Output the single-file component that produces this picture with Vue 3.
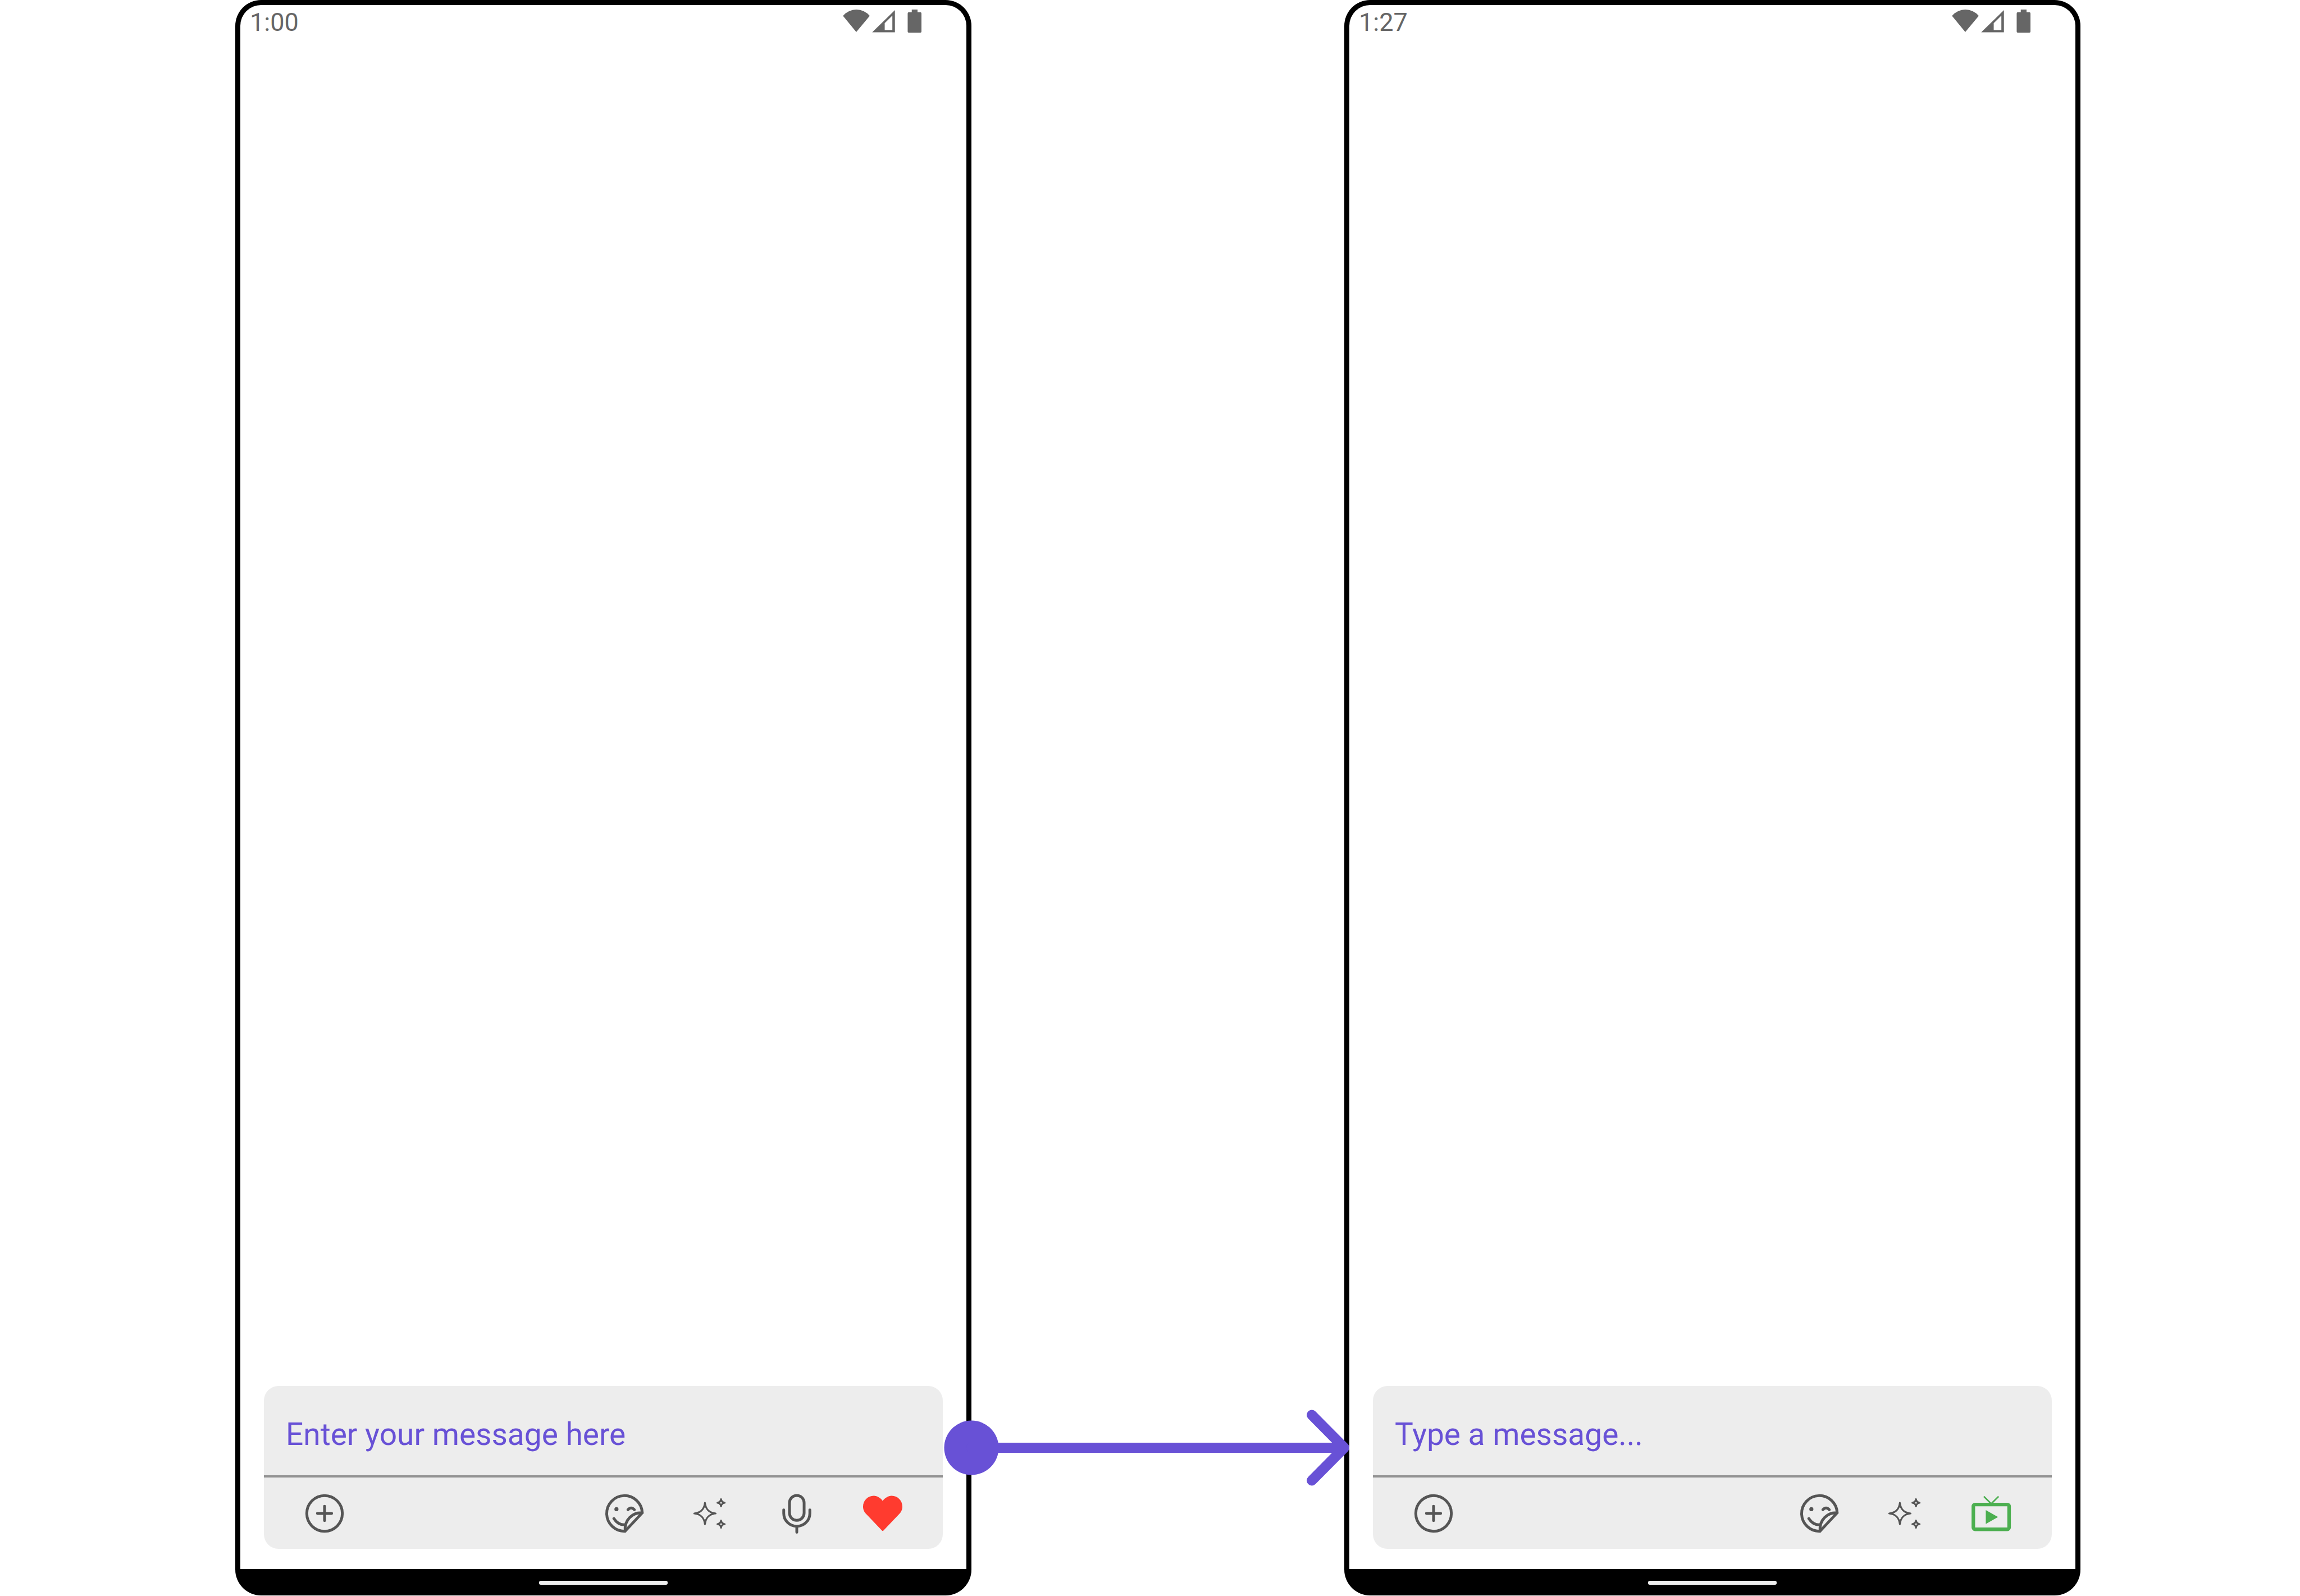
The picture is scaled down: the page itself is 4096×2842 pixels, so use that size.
<script setup>
const phones = [
  { id: 'before', time: '1:00', placeholder: 'Enter your message here', actions: ['sticker', 'sparkle', 'mic', 'heart'] },
  { id: 'after', time: '1:27', placeholder: 'Type a message...', actions: ['sticker', 'sparkle', 'live'] },
]
const labels = {
  sticker: 'Stickers',
  sparkle: 'Assistant',
  mic: 'Record audio',
  heart: 'Send reaction',
  live: 'Live video',
}
</script>

<template>
  <main class="page">
    <template v-for="(phone, index) in phones" :key="phone.id">
      <svg v-if="index > 0" class="arrow" viewBox="0 0 729 160" aria-hidden="true">
        <circle cx="0" cy="80" r="53.3" />
        <path d="M0 80H729M665.5 16L729 80L665.5 144" />
      </svg>
      <section class="phone">
        <div class="screen">
          <header class="status">
            <time>{{ phone.time }}</time>
            <svg class="status-icons" viewBox="0 0 154 46" aria-hidden="true">
              <path d="M26.3 44L0.3 12.3A34 34 0 0 1 52.7 12.3Z" />
              <path fill-rule="evenodd" d="M57.5 44.5H102V1ZM82 40V26.7L97 11.7V40Z" />
              <path d="M135 0H146.300V5H151.500Q154 5 154 7.500V43Q154 45.300 151.500 45.300H129.500Q127 45.300 127 43V7.500Q127 5 129.500 5H135Z" />
            </svg>
          </header>
          <div class="messages"></div>
          <form class="composer" @submit.prevent>
            <input class="field" type="text" :placeholder="phone.placeholder" :aria-label="phone.placeholder" />
            <div class="toolbar">
              <button type="button" class="tool" aria-label="Add attachment">
                <svg class="icon" viewBox="0 0 84 84">
                  <circle cx="42" cy="42" r="35" />
                  <path d="M42 28V56M28 42H56" />
                </svg>
              </button>
              <div class="actions">
                <button v-for="name in phone.actions" :key="name" type="button" class="tool" :aria-label="labels[name]">
                  <svg v-if="name === 'sticker'" class="icon" viewBox="0 0 84 84">
                    <path d="M76 40.700A35 35 0 1 0 42.200 77L76 40.700C57.500 39.500 40.500 54 42.200 77" />
                    <path d="M20.200 52Q28.500 65 42.200 64.300M47.800 34.700Q54.200 27.500 60.500 34.700" />
                    <circle class="dot" cx="25.200" cy="33.700" r="4" />
                  </svg>
                  <svg v-else-if="name === 'sparkle'" class="icon fine" viewBox="0 0 84 84">
                    <path d="M30.300 21.200C32 34 38 40.500 51.300 42C38 43.500 32 50 30.300 63C28.600 50 22.500 43.500 9.300 42C22.500 40.500 28.600 34 30.300 21.200Z" />
                    <path d="M62 13.800C62.600 18.400 64.600 20.400 69.200 21C64.600 21.600 62.600 23.600 62 28.200C61.400 23.600 59.400 21.600 54.800 21C59.400 20.400 61.400 18.400 62 13.800Z" />
                    <path d="M62 55.800C62.600 60.400 64.600 62.400 69.200 63C64.600 63.600 62.600 65.600 62 70.200C61.400 65.600 59.400 63.600 54.800 63C59.400 62.400 61.400 60.400 62 55.800Z" />
                  </svg>
                  <svg v-else-if="name === 'mic'" class="icon" viewBox="0 0 84 84">
                    <rect x="27.600" y="6.600" width="28.800" height="49" rx="14.400" />
                    <path d="M16.300 35V41.600A25.700 25.700 0 0 0 67.700 41.600V35M42 67.300V79" />
                  </svg>
                  <svg v-else-if="name === 'heart'" class="icon heart" viewBox="0 0 84 84">
                    <path d="M42 17.300C38 12 31 7.300 24.500 7.300C12.500 7.300 3.300 16.800 3.300 28.600C3.300 34.500 6 39.500 9.500 43L40.600 75.700Q42 77.400 43.400 75.700L74.500 43C78 39.500 80.700 34.500 80.700 28.600C80.700 16.800 71.500 7.300 59.500 7.300C53 7.300 46 12 42 17.300Z" />
                  </svg>
                  <svg v-else class="icon live" viewBox="0 0 84 84">
                    <rect x="5.800" y="24.500" width="70.400" height="48.700" rx="3.500" />
                    <path class="antenna" d="M26.500 8.500L41 23L55.500 8.500" />
                    <path class="play" d="M30.300 35.300L54.400 49L30.300 62.700Z" />
                  </svg>
                </button>
              </div>
            </div>
          </form>
        </div>
        <footer class="nav"><span class="handle"></span></footer>
      </section>
    </template>
  </main>
</template>

<style>
body {
  background: #fff;
}
</style>

<style scoped>
.page {
  box-sizing: border-box;
  display: flex;
  min-height: 100vh;
  padding: 0 391px 1px 419px;
  font-family: Roboto, "Liberation Sans", sans-serif;
}
.phone {
  flex: 1;
  min-width: 0;
  display: flex;
  flex-direction: column;
  box-sizing: border-box;
  padding: 9px 9px 0;
  border-radius: 46px;
  background: #000;
}
.screen {
  flex: 1;
  display: flex;
  flex-direction: column;
  border-radius: 37px 37px 0 0;
  background: #fff;
}
.status {
  display: flex;
  align-items: flex-start;
  justify-content: space-between;
  padding: 8px 80px 0 17px;
  color: #666;
  font-size: 45px;
  line-height: 46px;
}
.status-icons {
  width: 140px;
  height: 42px;
  fill: #666;
}
.messages {
  flex: 1;
}
.composer {
  margin: 0 42px 36px;
  border-radius: 26px;
  background: #ededed;
}
.field {
  display: block;
  box-sizing: border-box;
  width: 100%;
  height: 163px;
  margin: 0;
  padding: 12px 39px 0;
  border: 0;
  border-bottom: 4px solid #929292;
  border-radius: 0;
  outline: 0;
  background: transparent;
  color: #6851d6;
  font: 400 55px/64px Roboto, "Liberation Sans", sans-serif;
}
.field::placeholder {
  color: #6851d6;
  opacity: 1;
}
.toolbar {
  display: flex;
  justify-content: space-between;
  padding: 0 31px;
}
.actions {
  display: flex;
}
.tool {
  display: flex;
  align-items: center;
  justify-content: center;
  width: 153px;
  height: 127px;
  padding: 0;
  border: 0;
  background: none;
}
.icon {
  width: 76px;
  height: 76px;
  fill: none;
  stroke: #555;
  stroke-width: 5.5;
  stroke-linecap: round;
  stroke-linejoin: round;
}
.fine {
  stroke-width: 3.5;
}
.dot {
  fill: #555;
  stroke: none;
}
.heart {
  fill: #ff3b2f;
  stroke: none;
}
.live {
  stroke: #4caf50;
  stroke-width: 7;
}
.antenna {
  stroke-width: 3;
  stroke-linecap: butt;
}
.play {
  fill: #4caf50;
  stroke: none;
}
.nav {
  display: flex;
  align-items: center;
  justify-content: center;
  box-sizing: border-box;
  height: 47px;
  padding-top: 2px;
}
.handle {
  width: 229px;
  height: 7px;
  border-radius: 3px;
  background: #ededed;
}
.arrow {
  position: relative;
  z-index: 1;
  flex: none;
  align-self: flex-end;
  width: 664px;
  height: 146px;
  margin-bottom: 190px;
  overflow: visible;
  fill: #6851d6;
}
.arrow path {
  fill: none;
  stroke: #6851d6;
  stroke-width: 20;
  stroke-linecap: round;
  stroke-linejoin: round;
}
</style>
